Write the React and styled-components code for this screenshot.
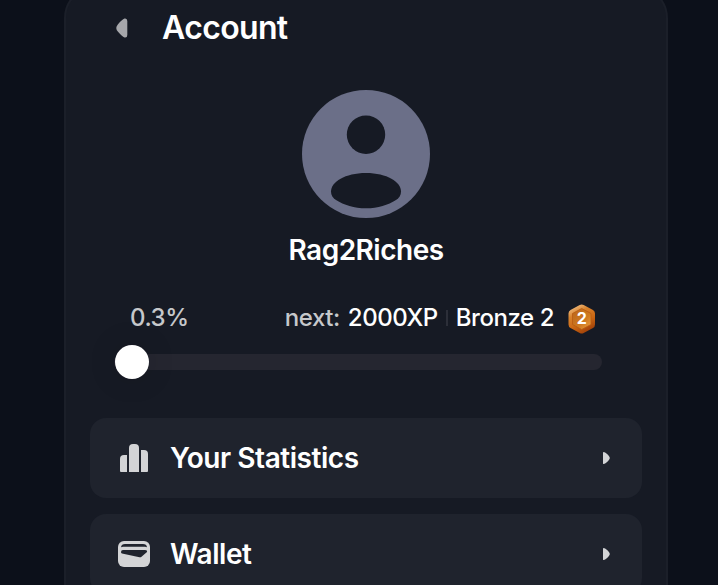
import React from 'react';
import styled, { createGlobalStyle } from 'styled-components';

const GlobalStyle = createGlobalStyle`
    * {
        box-sizing: border-box;
    }
    body {
        margin: 0;
        overflow: hidden;
        background-color: #0c101a;
        font-family: Inter, "Liberation Sans", sans-serif;
        color: #fff;
    }
`

const Page = styled.div`
    display: flex;
    height: 585px;
    overflow: hidden;
    padding-left: 64px;
`

const Panel = styled.main`
    width: 604px;
    height: 660px;
    flex-shrink: 0;
    margin-top: -14px;
    padding: 0 24px;
    background-color: #161a24;
    border: 2px solid #1b1f29;
    border-radius: 32px;
`

const Header = styled.header`
    display: flex;
    align-items: center;
    height: 80px;
    padding-left: 24px;
`

const BackButton = styled.button`
    display: flex;
    width: 16px;
    margin-right: 32px;
    padding: 0;
    border: none;
    background: none;
`

const Title = styled.h1`
    margin: 0;
    font-size: 32px;
    line-height: 40px;
    font-weight: 600;
    letter-spacing: -0.65px;
`

const Profile = styled.section`
    display: flex;
    flex-direction: column;
    align-items: center;
    padding-top: 22px;
`

const Username = styled.h2`
    margin: 14px 0 0;
    font-size: 28px;
    line-height: 36px;
    font-weight: 600;
    letter-spacing: -0.5px;
`

const LevelRow = styled.div`
    display: flex;
    align-items: center;
    height: 36px;
    margin-top: 32px;
    padding: 0 46px 0 40px;
    font-size: 24px;
    line-height: 36px;
    font-weight: 500;
    letter-spacing: -0.45px;
`

const Muted = styled.span`
    color: #c6c8cb;
    font-weight: 450;
    margin-right: ${props => props.$push ? 'auto' : '8px'};
`

const Strong = styled.span`
    color: #fff;
`

const Divider = styled.span`
    width: 2px;
    height: 16px;
    margin: 0 8px;
    background-color: #2c2f39;
`

const Badge = styled.svg`
    margin: 2px 0 0 13px;
    flex-shrink: 0;
`

const Track = styled.div`
    display: flex;
    align-items: center;
    height: 16px;
    margin: 18px 40px 0 24px;
    border-radius: 8px;
    background-color: #252630;
`

const Thumb = styled.div`
    width: 34px;
    height: 34px;
    border-radius: 50%;
    background-color: #fff;
    box-shadow: 0 0 30px rgba(0, 0, 0, 0.14);
`

const Menu = styled.nav`
    display: flex;
    flex-direction: column;
    gap: 16px;
    margin-top: 48px;
`

const MenuItem = styled.a`
    display: flex;
    align-items: center;
    height: 80px;
    padding: 0 32px 0 28px;
    border-radius: 16px;
    background-color: #1f232d;
`

const MenuLabel = styled.span`
    flex: 1;
    margin-left: 20px;
    font-size: 28px;
    line-height: 36px;
    font-weight: 600;
    letter-spacing: -0.45px;
`

const Avatar = () => (
    <svg width="128" height="128" viewBox="0 0 128 128">
        <circle cx="64" cy="64" r="64" fill="#6b6f88" />
        <circle cx="64" cy="44.7" r="19.2" fill="#161a24" />
        <path d="M64 83C85 83 99 92 99 101.500C99 105.500 97 108 94 110C86 115 76 118.300 64 118.300C52 118.300 42 115 34 110C31 108 29 105.500 29 101.500C29 92 43 83 64 83Z" fill="#161a24" />
    </svg>
)

const StatsIcon = () => (
    <svg width="32" height="32" viewBox="0 0 32 32" fill="#d3d4d6">
        <path d="M2 29V17Q2 13 6 13H9V30H3Q2 30 2 29Z" />
        <path d="M11 30V6Q11 2 15 2H17Q21 2 21 6V30Z" />
        <path d="M23 30V8H26Q30 8 30 12V29Q30 30 29 30Z" />
    </svg>
)

const WalletIcon = () => (
    <svg width="32" height="32" viewBox="0 0 32 32">
        <rect y="3" width="32" height="26" rx="6" fill="#d3d4d6" />
        <path d="M3 9.200Q3.500 6 7 6H25Q28.500 6 29 9.200Q28 8.800 27 8.800H5Q4 8.800 3 9.200Z" fill="#1f232d" />
        <path d="M5 12H27Q29.500 12 29 14L23.500 18.700Q22.700 19.400 21.500 19.200L4 15.500Q3 15.200 3 14Q3 12 5 12Z" fill="#1f232d" />
    </svg>
)

const Caret = () => (
    <svg width="8" height="14" viewBox="0 0 8 14">
        <path d="M1 1.500Q1.500 0.300 3.500 1.800Q7.800 5 7.800 7Q7.800 9 3.500 12.200Q1.500 13.700 1 12.500Z" fill="#d3d4d6" />
    </svg>
)

const RankBadge = () => (
    <Badge width="29" height="30" viewBox="0 0 29 30">
        <defs>
            <linearGradient id="rim" x1="0.2" y1="0" x2="0.7" y2="1">
                <stop offset="0" stopColor="#f3c48c" />
                <stop offset="0.3" stopColor="#d8822c" />
                <stop offset="0.65" stopColor="#c96512" />
                <stop offset="1" stopColor="#9c3d08" />
            </linearGradient>
            <linearGradient id="core" x1="0" y1="0" x2="1" y2="1">
                <stop offset="0" stopColor="#b9651b" />
                <stop offset="0.6" stopColor="#cf7a20" />
                <stop offset="1" stopColor="#eda040" />
            </linearGradient>
        </defs>
        <path d="M12.700 1Q14.700 0 16.700 1L26 6Q28 7 28 9.500V20.500Q28 23 26 24L16.700 29Q14.700 30 12.700 29L3.500 24Q1.500 23 1.500 20.500V9.500Q1.500 7 3.500 6Z" fill="url(#rim)" />
        <path d="M14.700 4.500L24 9.500V20.500L14.700 25.500L5.500 20.500V9.500Z" fill="url(#core)" stroke="#b85a12" strokeWidth="0.8" strokeLinejoin="round" />
        <text x="14.700" y="20.200" textAnchor="middle" fontSize="16" fontWeight="700" letterSpacing="0" fill="#fff">2</text>
    </Badge>
)

const progress = 0.3;

const menuItems = [
    { label: 'Your Statistics', Icon: StatsIcon },
    { label: 'Wallet', Icon: WalletIcon },
]

const App = () => {
    return (
        <Page>
            <GlobalStyle />
            <Panel>
                <Header>
                    <BackButton aria-label="Back">
                        <svg width="16" height="22" viewBox="0 0 16 22">
                            <path d="M13.300 4V18Q13.300 21 10.500 20.500Q8 19.500 4 14.800Q0.500 11 4 7.200Q8 2.500 10.500 1.500Q13.300 1 13.300 4Z" fill="#a6a7ab" />
                        </svg>
                    </BackButton>
                    <Title>Account</Title>
                </Header>
                <Profile>
                    <Avatar />
                    <Username>Rag2Riches</Username>
                </Profile>
                <LevelRow>
                    <Muted $push>{progress}%</Muted>
                    <Muted>next:</Muted>
                    <Strong>2000XP</Strong>
                    <Divider />
                    <Strong>Bronze 2</Strong>
                    <RankBadge />
                </LevelRow>
                <Track>
                    <Thumb style={{ marginLeft: `${progress}%` }} />
                </Track>
                <Menu>
                    {menuItems.map(({ label, Icon }) => (
                        <MenuItem key={label}>
                            <Icon />
                            <MenuLabel>{label}</MenuLabel>
                            <Caret />
                        </MenuItem>
                    ))}
                </Menu>
            </Panel>
        </Page>
    )
}

export default App;
